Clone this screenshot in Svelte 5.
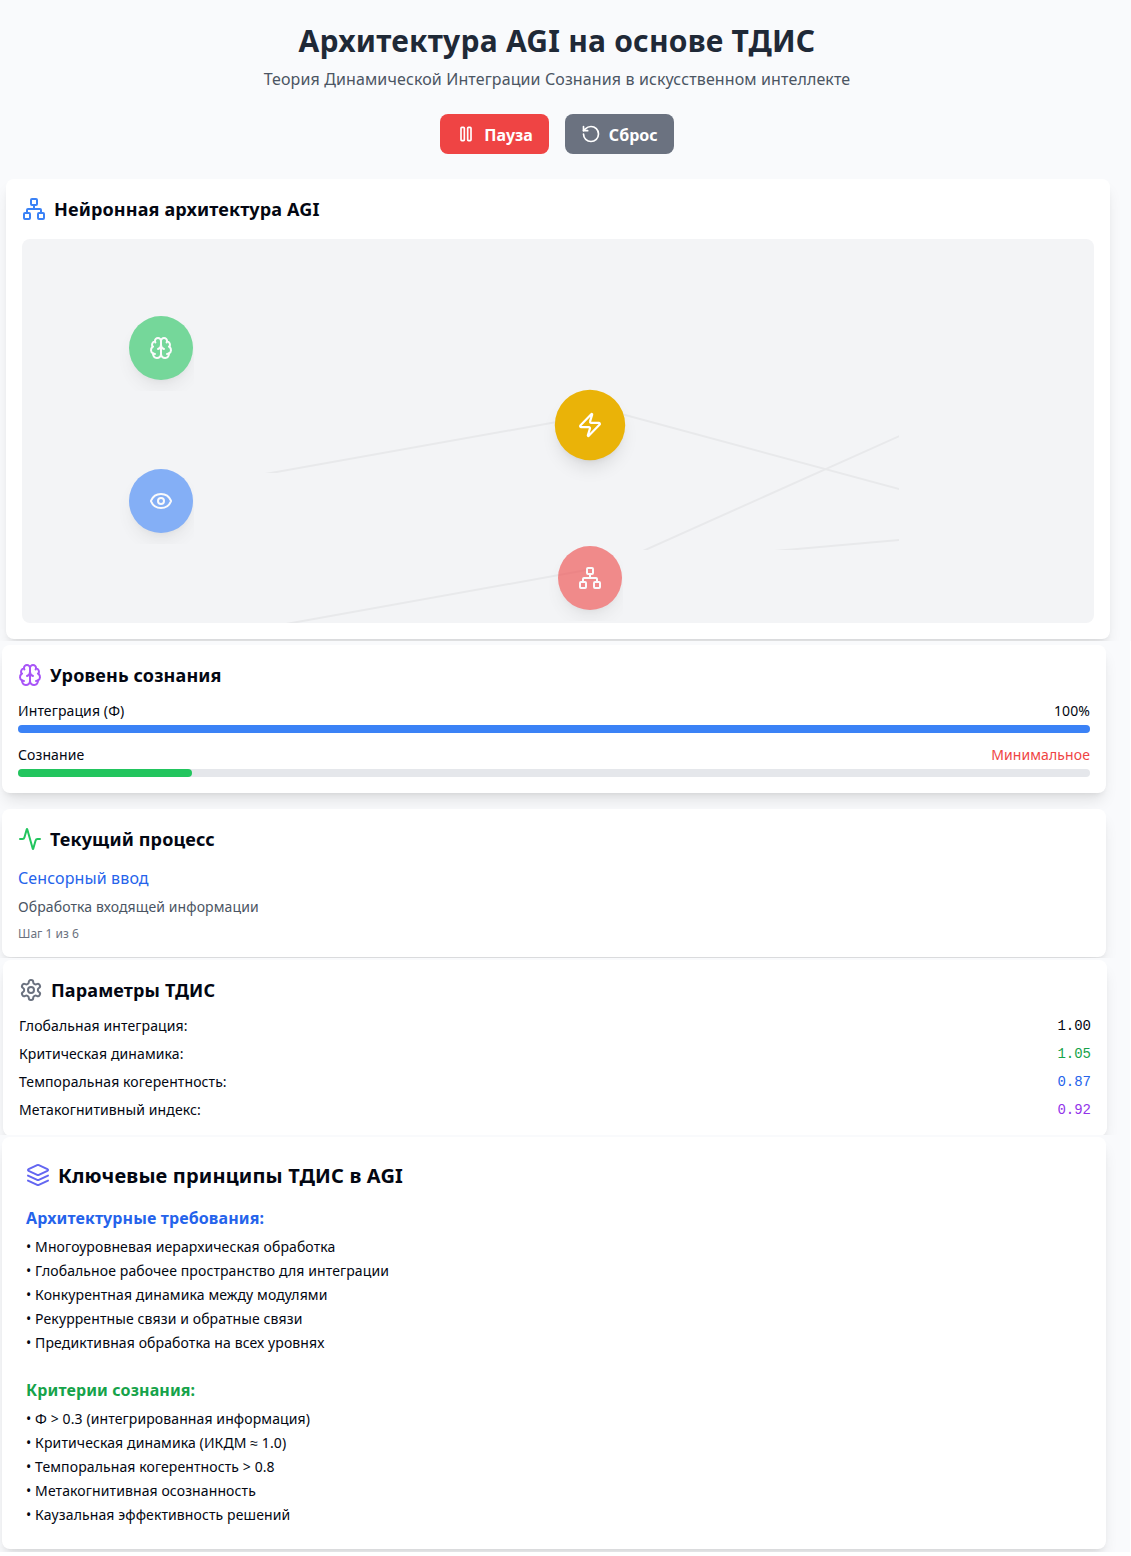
<script>
  const icons = {
    network: [
      'M17 16h4a1 1 0 0 1 1 1v4a1 1 0 0 1-1 1h-4a1 1 0 0 1-1-1v-4a1 1 0 0 1 1-1z',
      'M3 16h4a1 1 0 0 1 1 1v4a1 1 0 0 1-1 1H3a1 1 0 0 1-1-1v-4a1 1 0 0 1 1-1z',
      'M10 2h4a1 1 0 0 1 1 1v4a1 1 0 0 1-1 1h-4a1 1 0 0 1-1-1V3a1 1 0 0 1 1-1z',
      'M5 16v-3a1 1 0 0 1 1-1h12a1 1 0 0 1 1 1v3',
      'M12 12V8'
    ],
    brain: [
      'M12 5a3 3 0 1 0-5.997.125 4 4 0 0 0-2.526 5.77 4 4 0 0 0 .556 6.588A4 4 0 1 0 12 18Z',
      'M12 5a3 3 0 1 1 5.997.125 4 4 0 0 1 2.526 5.77 4 4 0 0 1-.556 6.588A4 4 0 1 1 12 18Z',
      'M15 13a4.5 4.5 0 0 1-3-4 4.5 4.5 0 0 1-3 4',
      'M17.599 6.5a3 3 0 0 0 .399-1.375',
      'M6.003 5.125A3 3 0 0 0 6.401 6.5',
      'M3.477 10.896a4 4 0 0 1 .585-.396',
      'M19.938 10.5a4 4 0 0 1 .585.396',
      'M6 18a4 4 0 0 1-1.967-.516',
      'M19.967 17.484A4 4 0 0 1 18 18'
    ],
    eye: [
      'M2.062 12.348a1 1 0 0 1 0-.696 10.75 10.75 0 0 1 19.876 0 1 1 0 0 1 0 .696 10.75 10.75 0 0 1-19.876 0',
      'M9 12a3 3 0 1 0 6 0 3 3 0 1 0-6 0'
    ],
    zap: [
      'M4 14a1 1 0 0 1-.78-1.63l9.9-10.2a.5.5 0 0 1 .86.46l-1.92 6.02A1 1 0 0 0 13 10h7a1 1 0 0 1 .78 1.63l-9.9 10.2a.5.5 0 0 1-.86-.46l1.92-6.02A1 1 0 0 0 11 14z'
    ],
    activity: [
      'M22 12h-2.48a2 2 0 0 0-1.93 1.46l-2.35 8.36a.25.25 0 0 1-.48 0L9.24 2.18a.25.25 0 0 0-.48 0l-2.35 8.36A2 2 0 0 1 4.49 12H2'
    ],
    settings: [
      'M12.22 2h-.44a2 2 0 0 0-2 2v.18a2 2 0 0 1-1 1.73l-.43.25a2 2 0 0 1-2 0l-.15-.08a2 2 0 0 0-2.73.73l-.22.38a2 2 0 0 0 .73 2.73l.15.1a2 2 0 0 1 1 1.72v.51a2 2 0 0 1-1 1.74l-.15.09a2 2 0 0 0-.73 2.73l.22.38a2 2 0 0 0 2.73.73l.15-.08a2 2 0 0 1 2 0l.43.25a2 2 0 0 1 1 1.73V20a2 2 0 0 0 2 2h.44a2 2 0 0 0 2-2v-.18a2 2 0 0 1 1-1.73l.43-.25a2 2 0 0 1 2 0l.15.08a2 2 0 0 0 2.73-.73l.22-.39a2 2 0 0 0-.73-2.73l-.15-.08a2 2 0 0 1-1-1.74v-.5a2 2 0 0 1 1-1.74l.15-.09a2 2 0 0 0 .73-2.73l-.22-.38a2 2 0 0 0-2.73-.73l-.15.08a2 2 0 0 1-2 0l-.43-.25a2 2 0 0 1-1-1.73V4a2 2 0 0 0-2-2z',
      'M9 12a3 3 0 1 0 6 0 3 3 0 1 0-6 0'
    ],
    layers: [
      'M12.83 2.18a2 2 0 0 0-1.66 0L2.6 6.08a1 1 0 0 0 0 1.83l8.58 3.91a2 2 0 0 0 1.66 0l8.58-3.9a1 1 0 0 0 0-1.83Z',
      'm22 12.65-9.17 4.16a2 2 0 0 1-1.66 0L2 12.65',
      'm22 17.65-9.17 4.16a2 2 0 0 1-1.66 0L2 17.65'
    ],
    pause: [
      'M15 4h2a1 1 0 0 1 1 1v14a1 1 0 0 1-1 1h-2a1 1 0 0 1-1-1V5a1 1 0 0 1 1-1z',
      'M7 4h2a1 1 0 0 1 1 1v14a1 1 0 0 1-1 1H7a1 1 0 0 1-1-1V5a1 1 0 0 1 1-1z'
    ],
    reset: ['M3 12a9 9 0 1 0 9-9 9.75 9.75 0 0 0-6.74 2.74L3 8', 'M3 3v5h5']
  };

  const nodes = [
    { icon: 'brain', tone: 'green', x: 139, y: 109 },
    { icon: 'eye', tone: 'blue', x: 139, y: 262 },
    { icon: 'zap', tone: 'yellow', x: 568, y: 186, active: true },
    { icon: 'network', tone: 'red', x: 568, y: 339 }
  ];

  const params = [
    { name: 'Глобальная интеграция:', value: '1.00', tone: 'v-plain' },
    { name: 'Критическая динамика:', value: '1.05', tone: 'v-green' },
    { name: 'Темпоральная когерентность:', value: '0.87', tone: 'v-blue' },
    { name: 'Метакогнитивный индекс:', value: '0.92', tone: 'v-purple' }
  ];

  const meters = [
    { name: 'Интеграция (Φ)', label: '100%', tone: 'm-blue', labelTone: 'v-plain', value: 100 },
    { name: 'Сознание', label: 'Минимальное', tone: 'm-green', labelTone: 'v-red', value: 16.25 }
  ];

  const principles = [
    {
      title: 'Архитектурные требования:',
      tone: 'v-blue',
      items: [
        'Многоуровневая иерархическая обработка',
        'Глобальное рабочее пространство для интеграции',
        'Конкурентная динамика между модулями',
        'Рекуррентные связи и обратные связи',
        'Предиктивная обработка на всех уровнях'
      ]
    },
    {
      title: 'Критерии сознания:',
      tone: 'v-green',
      items: [
        'Φ > 0.3 (интегрированная информация)',
        'Критическая динамика (ИКДМ ≈ 1.0)',
        'Темпоральная когерентность > 0.8',
        'Метакогнитивная осознанность',
        'Каузальная эффективность решений'
      ]
    }
  ];
</script>

{#snippet icon(name, cls)}
  <svg class="icon {cls}" viewBox="0 0 24 24" aria-hidden="true">
    {#each icons[name] as d}
      <path {d} />
    {/each}
  </svg>
{/snippet}

<main>
  <section class="band band-top">
    <header>
      <h1>Архитектура AGI на основе ТДИС</h1>
      <p>Теория Динамической Интеграции Сознания в искусственном интеллекте</p>
      <div class="actions">
        <button class="btn pause">{@render icon('pause', 'small')}<span class="low">Пауза</span></button>
        <button class="btn reset">{@render icon('reset', 'small')}<span class="low">Сброс</span></button>
      </div>
    </header>
    <article class="card">
      <h2 class="wide">{@render icon('network', 'i-blue')}Нейронная архитектура AGI</h2>
      <div class="canvas">
        <svg class="links" viewBox="0 0 1072 384" aria-hidden="true">
          <clipPath id="link-a"><rect x="0" y="0" width="570" height="234" /></clipPath>
          <clipPath id="link-b"><rect x="560" y="0" width="317" height="311" /></clipPath>
          <line x1="236" y1="236.3" x2="568" y2="177" clip-path="url(#link-a)" />
          <g clip-path="url(#link-b)">
            <line x1="568" y1="166.5" x2="890" y2="253.6" />
            <line x1="612" y1="316" x2="890" y2="191.4" />
            <line x1="740" y1="313.1" x2="890" y2="299.8" />
          </g>
          <line x1="250" y1="387.5" x2="566" y2="330.8" />
        </svg>
        {#each nodes as n}
          <div class="node {n.tone}" class:active={n.active} style:left="{n.x}px" style:top="{n.y}px">
            {@render icon(n.icon, 'white')}
          </div>
        {/each}
      </div>
    </article>
  </section>

  <section class="band band-state">
    <article class="card">
      <h2>{@render icon('brain', 'i-purple')}Уровень сознания</h2>
      <div class="meters">
        {#each meters as m}
          <div class="meter">
            <div class="row"><span>{m.name}</span><span class={m.labelTone}>{m.label}</span></div>
            <div class="track"><div class="fill {m.tone}" style:width="{m.value}%"></div></div>
          </div>
        {/each}
      </div>
    </article>
    <article class="card">
      <h2>{@render icon('activity', 'i-green')}Текущий процесс</h2>
      <div class="process">
        <div class="stage">Сенсорный ввод</div>
        <div class="about">Обработка входящей информации</div>
        <div class="step">Шаг 1 из 6</div>
      </div>
    </article>
  </section>

  <section class="band band-params">
    <article class="card">
      <h2>{@render icon('settings', 'i-gray')}Параметры ТДИС</h2>
      <div class="params">
        {#each params as p}
          <div class="row"><span>{p.name}</span><span class="mono {p.tone}">{p.value}</span></div>
        {/each}
      </div>
    </article>
  </section>

  <section class="band band-principles">
    <article class="card roomy">
      <h2 class="wide large">{@render icon('layers', 'i-indigo')}<span class="low">Ключевые принципы ТДИС в AGI</span></h2>
      <div class="groups">
        {#each principles as g}
          <div>
            <h3 class={g.tone}>{g.title}</h3>
            <ul>
              {#each g.items as item}
                <li>• {item}</li>
              {/each}
            </ul>
          </div>
        {/each}
      </div>
    </article>
  </section>
</main>

<style>
  :global(body) {
    background: #fff;
    color: #030712;
    font-family: 'Noto Sans', sans-serif;
    letter-spacing: 0.0075em;
  }
  main {
    width: 1131px;
    height: 1556px;
    overflow: hidden;
  }
  h1, h2, h3, p, ul { margin: 0; padding: 0; }
  h1, h2, h3, p, li, .row, .stage, .about { letter-spacing: 0.0075em; }
  ul { list-style: none; display: flex; flex-direction: column; gap: 4px; }

  .band {
    box-sizing: border-box;
    width: 1130px;
    overflow: hidden;
    background: #f9fafc;
    display: flex;
    flex-direction: column;
  }
  .band-top { width: 1131px; height: 641px; padding: 23px 21px 0 6px; gap: 25px; }
  .band-state { height: 317px; padding: 4px 24px 0 2px; gap: 16px; }
  .band-params { height: 177px; padding: 2px 23px 0 3px; }
  .band-principles { height: 417px; padding: 2px 24px 0 2px; }

  header { width: 1102px; text-align: center; }
  h1 { font-size: 30px; line-height: 36px; font-weight: 700; color: #1f2937; }
  header p { margin-top: 8px; font-size: 16px; line-height: 24px; color: #4b5563; }
  .actions { display: flex; justify-content: center; gap: 16px; margin-top: 23px; }
  .btn {
    display: flex;
    align-items: center;
    gap: 8px;
    height: 40px;
    padding: 0 16px;
    border: 0;
    border-radius: 8px;
    color: #fff;
    font: 700 16px/24px 'Noto Sans', sans-serif;
  }
  .pause { background: #ef4444; }
  .reset { background: #6b7280; }
  /* optical centring of bold labels next to their icons */
  .low { line-height: 24px; padding-top: 2px; }

  .icon {
    width: 24px;
    height: 24px;
    flex: none;
    fill: none;
    stroke: currentColor;
    stroke-width: 2;
    stroke-linecap: round;
    stroke-linejoin: round;
  }
  .small { width: 20px; height: 20px; }
  .white { color: #fff; }
  .i-blue { color: #3b82f6; }
  .i-purple { color: #a855f7; }
  .i-green { color: #22c55e; }
  .i-gray { color: #6b7280; }
  .i-indigo { color: #6366f1; }

  .card {
    box-sizing: border-box;
    flex: none;
    width: 1104px;
    padding: 16px;
    border-radius: 8px;
    background: #fff;
    box-shadow: 0 10px 15px -3px rgb(0 0 0 / 0.1), 0 4px 6px -4px rgb(0 0 0 / 0.1);
  }
  .roomy { padding: 24px; }
  h2 {
    display: flex;
    align-items: center;
    gap: 8px;
    height: 28px;
    margin-bottom: 12px;
    font-size: 18px;
    line-height: 28px;
    font-weight: 700;
  }
  .wide { margin-bottom: 16px; }
  .large { font-size: 20px; }

  .canvas {
    position: relative;
    height: 384px;
    overflow: hidden;
    border-radius: 8px;
    background: #f3f4f6;
  }
  .links { display: block; width: 1072px; height: 384px; }
  .links line { stroke: #e8e9eb; stroke-width: 2; }
  .node {
    position: absolute;
    display: flex;
    align-items: center;
    justify-content: center;
    width: 64px;
    height: 64px;
    margin: -32px 0 0 -32px;
    border-radius: 50%;
    opacity: 0.6;
    clip-path: inset(-20px -1px -11px -20px);
    box-shadow: 0 10px 15px -3px rgb(0 0 0 / 0.1), 0 4px 6px -4px rgb(0 0 0 / 0.1);
  }
  .active {
    opacity: 1;
    clip-path: none;
    transform: scale(1.1);
  }
  .green { background: #22c55e; }
  .blue { background: #3b82f6; }
  .yellow { background: #eab308; }
  .red { background: #ef4444; }

  .row { display: flex; justify-content: space-between; font-size: 14px; line-height: 20px; }
  .meters { display: flex; flex-direction: column; gap: 12px; }
  .track { height: 8px; margin-top: 4px; border-radius: 4px; background: #e5e7eb; }
  .fill { height: 8px; border-radius: 4px; }
  .m-blue { background: #3b82f6; }
  .m-green { background: #22c55e; }

  .process { display: flex; flex-direction: column; gap: 8px; }
  .stage { margin-bottom: -1px; padding-top: 1px; font-size: 16px; line-height: 24px; color: #2563eb; }
  .about { font-size: 14px; line-height: 20px; color: #4b5563; }
  .step { margin-bottom: -1px; padding-top: 1px; font-size: 12px; line-height: 16px; letter-spacing: 0; color: #6b7280; }

  .params { display: flex; flex-direction: column; gap: 8px; }
  .mono { font-family: 'Liberation Mono', monospace; letter-spacing: 0; }
  .v-plain { color: #030712; }
  .v-green { color: #16a34a; }
  .v-blue { color: #2563eb; }
  .v-purple { color: #9333ea; }
  .v-red { color: #ef4444; }

  .groups { display: flex; flex-direction: column; gap: 24px; }
  h3 { margin-bottom: 7px; padding-top: 1px; font-size: 16px; line-height: 24px; font-weight: 700; }
  li { font-size: 14px; line-height: 20px; }
</style>
